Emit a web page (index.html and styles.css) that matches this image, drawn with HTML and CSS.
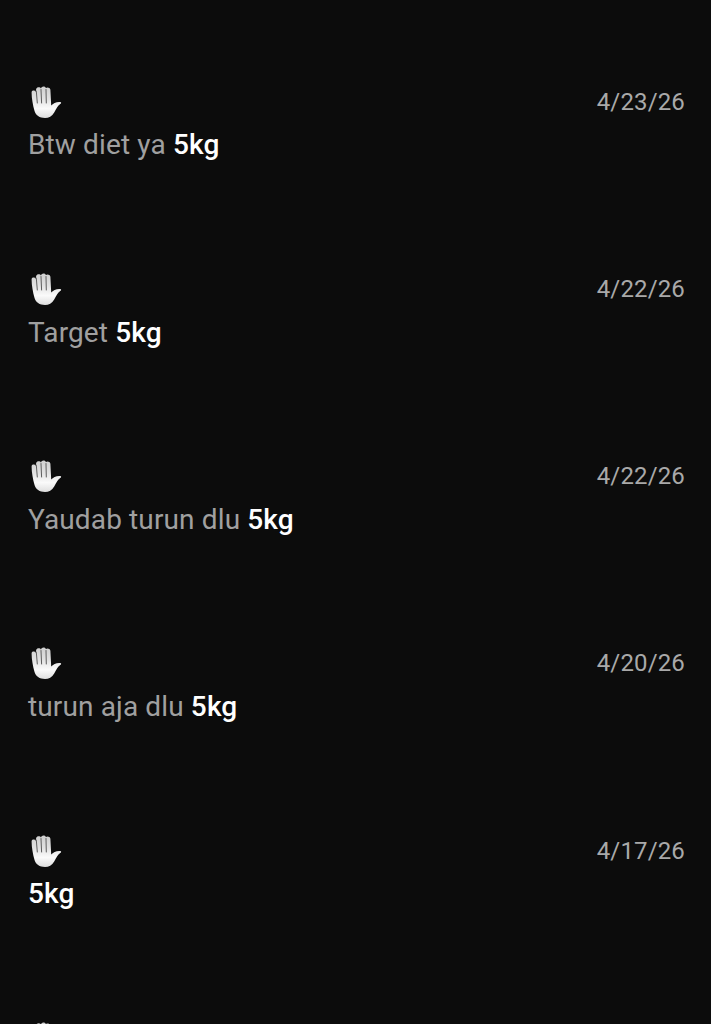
FILE: index.html
```html
<!DOCTYPE html>
<html lang="id">

<head>
    <meta charset="UTF-8">
    <meta name="viewport" content="width=device-width, initial-scale=1.0">
    <title>Pesan</title>
    <link rel="stylesheet" href="styles.css">
</head>

<body>

    <svg class="defs" width="0" height="0" aria-hidden="true">
        <defs>
            <linearGradient id="palm" x1="0" y1="0" x2="0" y2="1">
                <stop offset="0" stop-color="#cfcfcf"/>
                <stop offset="0.4" stop-color="#e2e2e2"/>
                <stop offset="0.7" stop-color="#fafafa"/>
                <stop offset="1" stop-color="#dedede"/>
            </linearGradient>
            <symbol id="hand" viewBox="0 0 32 34">
                <path fill="url(#palm)" d="M1.6 7.5C1.6 5 5 5 5.6 7L6.2 4C6.6 1.6 10.4 1.6 11 3.6 11.4 .8 15.4 .8 16 3.2 16.6 2 20.2 2.4 20.4 4.8L21.2 20.4C23 18.4 26.6 16.6 30.2 17 31.4 17.3 31.4 18.2 30.6 18.8 27.8 20.6 26.4 23.6 24.2 27.4 22 31.2 18.8 33 15 33 9.6 33 5.6 30.6 4.4 25.6 3 20.4 1.6 13.5 1.6 7.5Z"/>
                <path d="M6.3 6 7.3 18M11 4.5 11.6 18M16 4.5 16.3 18" stroke="#5e5e5e" stroke-width="1" stroke-linecap="round" fill="none"/>
            </symbol>
        </defs>
    </svg>

    <div class="list">
        <div class="item">
            <div class="item-top">
                <svg class="hand"><use href="#hand"/></svg>
                <span class="date">4/23/26</span>
            </div>
            <p class="msg">Btw diet ya <b>5kg</b></p>
        </div>
        <div class="item">
            <div class="item-top">
                <svg class="hand"><use href="#hand"/></svg>
                <span class="date">4/22/26</span>
            </div>
            <p class="msg">Target <b>5kg</b></p>
        </div>
        <div class="item">
            <div class="item-top">
                <svg class="hand"><use href="#hand"/></svg>
                <span class="date">4/22/26</span>
            </div>
            <p class="msg">Yaudab turun dlu <b>5kg</b></p>
        </div>
        <div class="item">
            <div class="item-top">
                <svg class="hand"><use href="#hand"/></svg>
                <span class="date">4/20/26</span>
            </div>
            <p class="msg">turun aja dlu <b>5kg</b></p>
        </div>
        <div class="item">
            <div class="item-top">
                <svg class="hand"><use href="#hand"/></svg>
                <span class="date">4/17/26</span>
            </div>
            <p class="msg"><b>5kg</b></p>
        </div>
        <div class="item">
            <div class="item-top">
                <svg class="hand"><use href="#hand"/></svg>
            </div>
        </div>
    </div>

</body>
</html>
```

FILE: styles.css
```css
html, body {
    height: 100%;
    overflow: hidden;
}

body {
    margin: 0;
    font-family: Roboto, "Liberation Sans", sans-serif;
    background-color: #0c0c0c;
}

.defs {
    display: block;
}

.list {
    box-sizing: border-box;
    height: 100%;
    overflow: hidden;
    padding: 84.6px 26px 0 28px;
}

.item {
    height: 187.25px;
}

.item-top {
    display: flex;
    justify-content: space-between;
    align-items: flex-start;
    height: 36px;
}

.hand {
    width: 32px;
    height: 34px;
    margin-left: 1.5px;
}

.date {
    font-size: 24px;
    letter-spacing: 0.15px;
    line-height: 34px;
    color: #a9a9a9;
}

.msg {
    margin: 6.8px 0 0;
    font-size: 28px;
    letter-spacing: 0.13px;
    line-height: 36px;
    color: #a0a0a0;
}

.msg b {
    font-weight: 500;
    color: #fff;
}
```
